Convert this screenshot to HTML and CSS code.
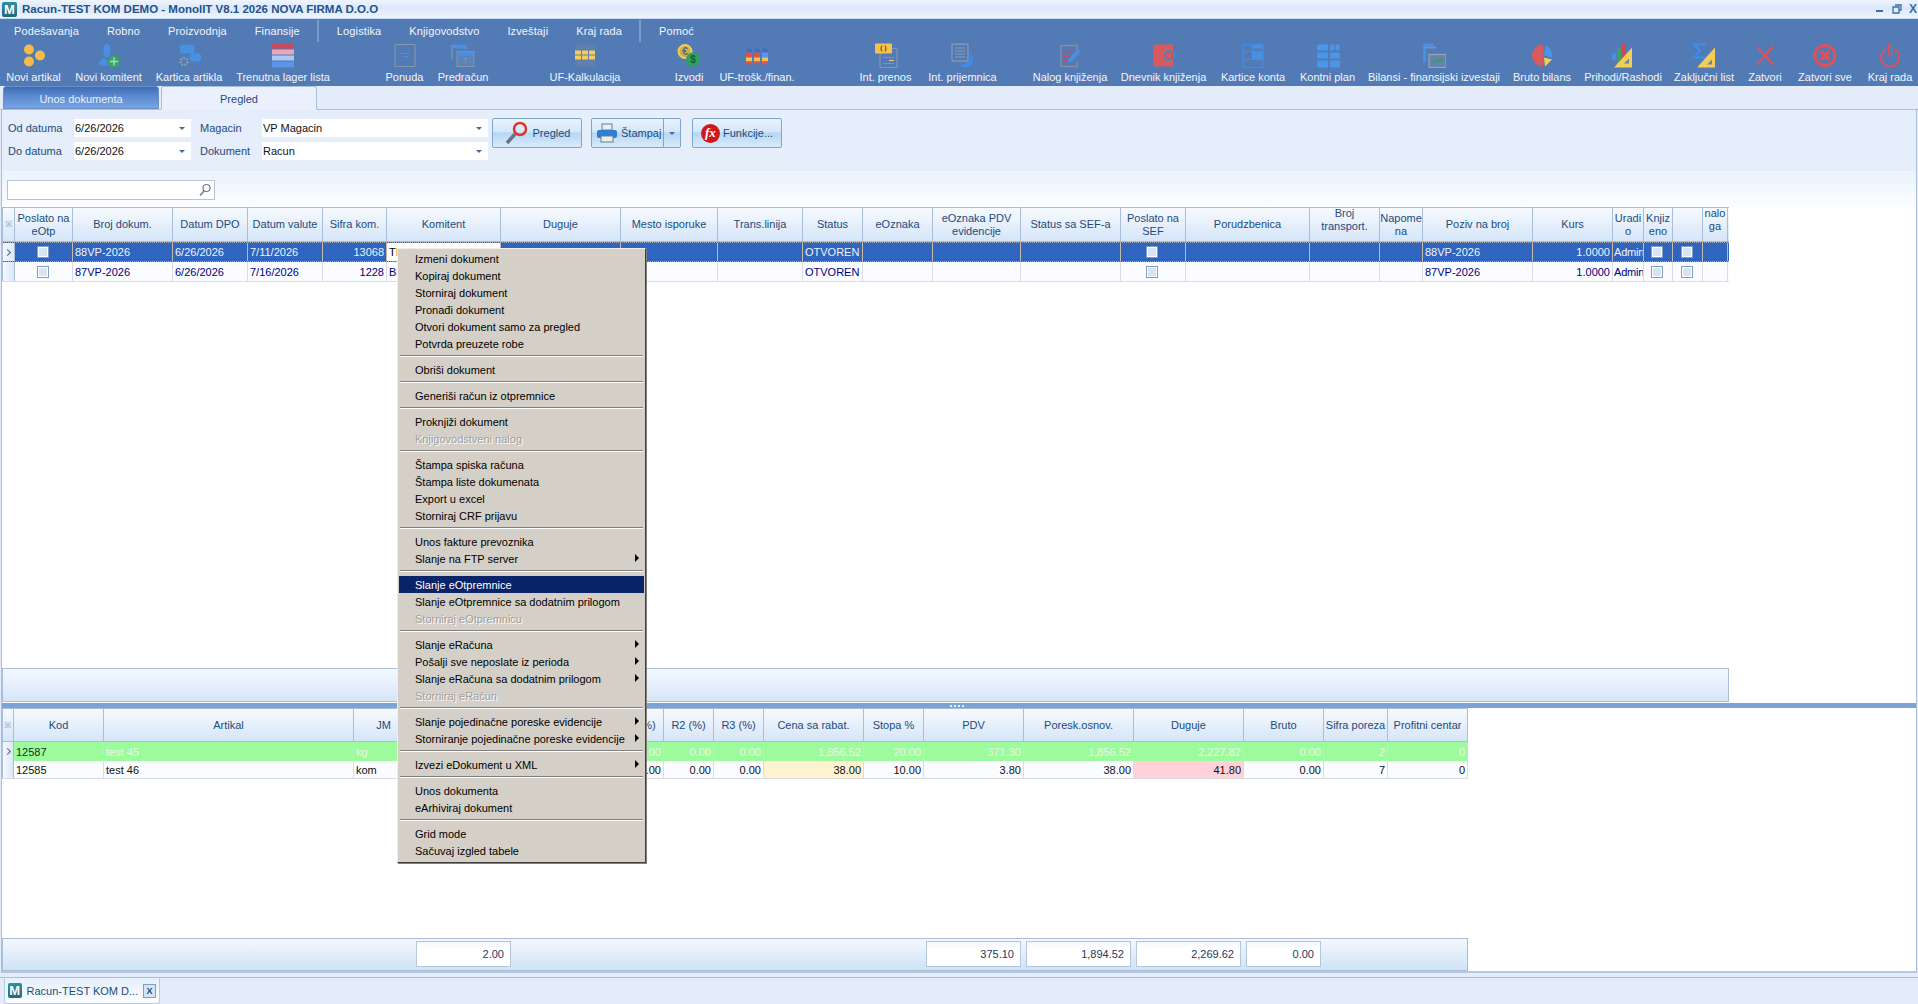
FILE: index.html
```html
<!DOCTYPE html>
<html lang="en">
<head>
<meta charset="UTF-8">
<title>Racun-TEST KOM DEMO</title>
<link rel="stylesheet" href="styles.css">
</head>
<body>
<div class="app">

  <div class="titlebar">
    <span class="logo">M</span>
    <span class="title-text">Racun-TEST KOM DEMO - MonolIT V8.1 2026 NOVA FIRMA D.O.O</span>
    <div class="win-btns">
      <svg width="10" height="10" viewBox="0 0 10 10"><rect x="1" y="6" width="7" height="2" fill="#3d6ea8"/></svg>
      <svg width="10" height="10" viewBox="0 0 10 10"><path d="M3 1h6v5H7M1 3h6v6H1z" fill="none" stroke="#3d6ea8" stroke-width="1.3"/></svg>
      <span class="win-x">X</span>
    </div>
  </div>

  <div class="band">
    <div class="menubar">
      <span class="menu-item">Podešavanja</span>
      <span class="menu-item">Robno</span>
      <span class="menu-item">Proizvodnja</span>
      <span class="menu-item">Finansije</span>
      <span class="menu-sep"></span>
      <span class="menu-item">Logistika</span>
      <span class="menu-item">Knjigovodstvo</span>
      <span class="menu-item">Izveštaji</span>
      <span class="menu-item">Kraj rada</span>
      <span class="menu-sep"></span>
      <span class="menu-item">Pomoć</span>
    </div>

    <div class="toolbar">
      <div class="tool-group tg1">
        <div class="tool">
          <svg viewBox="0 0 24 24"><circle cx="7" cy="6" r="5" fill="#f4bb45"/><circle cx="18" cy="12" r="5" fill="#f4bb45"/><circle cx="7" cy="18" r="5" fill="#f4bb45"/></svg>
          <span>Novi artikal</span>
        </div>
        <div class="tool">
          <svg viewBox="0 0 24 24"><ellipse cx="10" cy="7" rx="3.5" ry="7" fill="#4a90e2"/><path d="M2 22c0-5 3-7 5-7s4 2 4 7z" fill="#4a90e2"/><circle cx="17" cy="18" r="6" fill="#3aa368"/><path d="M17 14v8M13 18h8" stroke="#9fe0b8" stroke-width="1.5"/></svg>
          <span>Novi komitent</span>
        </div>
        <div class="tool">
          <svg viewBox="0 0 24 24"><rect x="3" y="1" width="14" height="9" rx="2" fill="#4a90e2"/><rect x="13" y="10" width="11" height="8" rx="2" fill="#4a90e2"/><circle cx="7" cy="18" r="3.5" fill="none" stroke="#8a97a8" stroke-width="2.5" stroke-dasharray="2 1"/></svg>
          <span>Kartica artikla</span>
        </div>
        <div class="tool">
          <svg viewBox="0 0 24 24"><rect x="1" width="22" height="5" fill="#c94a5a"/><rect x="1" y="6" width="22" height="5" fill="#e8a8b8"/><rect x="1" y="12" width="22" height="5" fill="#a8c8f5"/><rect x="1" y="18" width="22" height="6" fill="#5b94e8"/></svg>
          <span>Trenutna lager lista</span>
        </div>
      </div>

      <div class="tool-group tg2">
        <div class="tool">
          <svg viewBox="0 0 24 24"><rect x="2" y="1" width="20" height="22" rx="1" fill="none" stroke="#8296ad" stroke-width="1.2"/><path d="M7 10h10M9 13h6" stroke="#4a90e2" stroke-width="1.2"/></svg>
          <span>Ponuda</span>
        </div>
        <div class="tool">
          <svg viewBox="0 0 24 24"><path d="M1 16V2h14v4" fill="none" stroke="#8296ad" stroke-width="1.2"/><rect x="2" y="1" width="13" height="4" fill="#4a90e2"/><rect x="6" y="8" width="17" height="15" fill="#5c82b8" stroke="#8296ad"/><rect x="6" y="8" width="17" height="4" fill="#4a90e2"/><path d="M12 15h5M14.500 15v4" stroke="#8296ad"/></svg>
          <span>Predračun</span>
        </div>
      </div>

      <div class="tool-group tg3">
        <div class="tool">
          <svg viewBox="0 0 24 24"><rect x="2" y="1" width="20" height="22" fill="#5f7fae"/><g fill="#f3cd57"><rect x="2" y="7" width="6" height="4"/><rect x="9" y="7" width="6" height="4"/><rect x="16" y="7" width="6" height="4"/><rect x="2" y="12" width="6" height="4"/><rect x="9" y="12" width="6" height="4"/><rect x="16" y="12" width="6" height="4"/></g></svg>
          <span>UF-Kalkulacija</span>
        </div>
      </div>

      <div class="tool-group tg4">
        <div class="tool">
          <svg viewBox="0 0 24 24"><circle cx="8" cy="8" r="6.500" fill="#c9b04a" stroke="#efcb58" stroke-width="2"/><text x="8" y="11" class="coin-text" fill="#5a6a80">€</text><circle cx="16" cy="16" r="7" fill="#2fa060"/><text x="16" y="19.500" class="coin-text" fill="#0f5f38">$</text></svg>
          <span>Izvodi</span>
        </div>
        <div class="tool">
          <svg viewBox="0 0 24 24"><path d="M1 8q0-3 3-3t3 3v1H1z" fill="#3d6ec8"/><rect x="1" y="9" width="6" height="5" fill="#d9534f"/><rect x="1" y="14" width="6" height="4" fill="#f3c24f"/><path d="M1 18h6v2q-3 2-6 0z" fill="#d9534f"/><path d="M9 8q0-3 3-3t3 3v1H9z" fill="#3d6ec8"/><rect x="9" y="9" width="6" height="5" fill="#d9534f"/><rect x="9" y="14" width="6" height="4" fill="#f3c24f"/><path d="M9 18h6v2q-3 2-6 0z" fill="#d9534f"/><path d="M17 8q0-3 3-3t3 3v1h-6z" fill="#3d6ec8"/><rect x="17" y="9" width="6" height="5" fill="#5b94e8"/><rect x="17" y="14" width="6" height="4" fill="#f3c24f"/><path d="M17 18h6v2q-3 2-6 0z" fill="#d9534f"/></svg>
          <span>UF-trošk./finan.</span>
        </div>
      </div>

      <div class="tool-group tg5">
        <div class="tool">
          <svg viewBox="0 0 24 24"><rect x="6" y="5" width="17" height="19" fill="none" stroke="#8296ad" stroke-width="1.2"/><path d="M9 14h11M9 20h11" stroke="#8296ad"/><path d="M15 17h5" stroke="#f3c24f" stroke-width="1.2"/><rect x="1" width="17" height="10" rx="1" fill="#f3c24f"/><path d="M8 2q-2 3 0 6M11 2q2 3 0 6" fill="none" stroke="#8a6d1c" stroke-width="1.2"/></svg>
          <span>Int. prenos</span>
        </div>
        <div class="tool">
          <svg viewBox="0 0 24 24"><rect x="1" y="0.600" width="16" height="17" rx="1" fill="none" stroke="#8a9cb3" stroke-width="1.2"/><path d="M4 4.500h10M4 7.500h10M4 10.500h10M4 13.500h10" stroke="#8a9cb3"/><path d="M19 9C24 14 23 24 13 24C11 24 9.500 23 8.500 21.500C15 22 20 17 19 9z" fill="#3f8be6"/></svg>
          <span>Int. prijemnica</span>
        </div>
      </div>

      <div class="tool-group tg6">
        <div class="tool">
          <svg viewBox="0 0 24 24"><path d="M19 8V2H3v21h16v-5" fill="none" stroke="#8a8f9f" stroke-width="1.4"/><path d="M6 8h9M6 13h6M6 17h4" stroke="#c94a5a" stroke-width="1.4"/><path d="M20 5l3 3-9 10-4 1 1-4z" fill="#4a90e2"/></svg>
          <span>Nalog knjiženja</span>
        </div>
        <div class="tool">
          <svg viewBox="0 0 24 24"><path d="M1 3q0-2 2-2h18v22H3q-2 0-2-2z" fill="#d95a5e"/><circle cx="17" cy="12" r="5.500" fill="#a8606c" stroke="#4a90e2" stroke-width="1"/><circle cx="17" cy="12" r="2.500" fill="#d95a5e"/></svg>
          <span>Dnevnik knjiženja</span>
        </div>
        <div class="tool">
          <svg viewBox="0 0 24 24"><rect x="2" y="1" width="20" height="23" fill="none" stroke="#3f8be6" stroke-width="1.4"/><path d="M2 8h20M2 16h20M11 1v7" stroke="#3f8be6" stroke-width="1.2"/><rect x="11" y="8" width="11" height="8" fill="#4a90e2"/><rect x="11" y="1" width="11" height="4" fill="#4a90e2"/></svg>
          <span>Kartice konta</span>
        </div>
        <div class="tool">
          <svg viewBox="0 0 24 24"><g fill="#4a96ea"><rect x="1" y="1" width="11" height="6" rx="1"/><rect x="1" y="9" width="11" height="6" rx="1"/><rect x="1" y="17" width="11" height="7" rx="1"/><rect x="14" y="1" width="4" height="6" rx="1"/><rect x="19.500" y="1" width="4" height="6" rx="1"/><rect x="14" y="9" width="10" height="6" rx="1"/><rect x="14" y="17" width="10" height="7" rx="1"/></g></svg>
          <span>Kontni plan</span>
        </div>
        <div class="tool">
          <svg viewBox="0 0 24 24"><path d="M1 19V3q0-3 3-3h8v3H4v16z" fill="#4a90e2"/><rect x="3" y="3" width="11" height="2" fill="#6d94c8"/><rect x="7" y="11" width="17" height="13" fill="#6684ac" stroke="#98a4b0" stroke-width="1.2"/><path d="M10 21l3-4 2 2 2-3 2 2 3-3" fill="none" stroke="#2fa060" stroke-width="1.2"/></svg>
          <span>Bilansi - finansijski izvestaji</span>
        </div>
        <div class="tool">
          <svg viewBox="0 0 24 24"><path d="M13 1a11 11 0 1 0 0 22l1-10z" fill="#d95a5e"/><path d="M16 2a11 11 0 0 1 6 12l-8-2z" fill="#4a96ea"/><path d="M14 14l8 2-7 7z" fill="#f3cd57"/></svg>
          <span>Bruto bilans</span>
        </div>
        <div class="tool">
          <svg viewBox="0 0 24 24"><rect x="1" y="10" width="4" height="7" fill="#4a90e2"/><rect x="6" y="5" width="4" height="15" fill="#3aa368"/><rect x="11" y="0" width="4" height="15" fill="#c94a5a"/><path d="M21 4v20H3z" fill="#f3cd57"/><path d="M18 15v5h-5z" fill="#6684ac"/></svg>
          <span>Prihodi/Rashodi</span>
        </div>
        <div class="tool">
          <svg viewBox="0 0 24 24"><path d="M14 1H2l6 6-6 7h11" fill="none" stroke="#3f8be6" stroke-width="2.500"/><path d="M23 4v20H5z" fill="#f3cd57"/><path d="M20 16v5h-5z" fill="#6684ac"/></svg>
          <span>Zaključni list</span>
        </div>
        <div class="tool">
          <svg viewBox="0 0 24 24"><path d="M4 3l16 18M20 3L4 21" stroke="#d9535e" stroke-width="2.200"/></svg>
          <span>Zatvori</span>
        </div>
        <div class="tool">
          <svg viewBox="0 0 24 24"><circle cx="12" cy="12" r="10" fill="none" stroke="#d9535e" stroke-width="3"/><path d="M7.500 7.500l9 9M16.500 7.500l-9 9" stroke="#d9535e" stroke-width="3.500"/></svg>
          <span>Zatvori sve</span>
        </div>
        <div class="tool">
          <svg viewBox="0 0 24 24"><path d="M8 6a9 9 0 1 0 8 0" fill="none" stroke="#d9535e" stroke-width="2"/><rect x="10.500" y="1" width="3" height="10" fill="none" stroke="#d9535e"/></svg>
          <span>Kraj rada</span>
        </div>
      </div>
    </div>
  </div>

  <div class="tabs">
    <div class="tab tab-dark">Unos dokumenta</div>
    <div class="tab tab-open">Pregled</div>
  </div>

  <div class="content">
    <div class="filters">
      <div class="filter-grid">
        <label>Od datuma</label>
        <div class="combo"><span>6/26/2026</span><i class="caret"></i></div>
        <label class="label-2">Magacin</label>
        <div class="combo combo-wide"><span>VP Magacin</span><i class="caret"></i></div>
        <label>Do datuma</label>
        <div class="combo"><span>6/26/2026</span><i class="caret"></i></div>
        <label class="label-2">Dokument</label>
        <div class="combo combo-wide"><span>Racun</span><i class="caret"></i></div>
      </div>
      <div class="btn btn-pregled">
        <svg width="26" height="26" viewBox="0 0 26 26"><circle cx="16" cy="9" r="6" fill="none" stroke="#d8382e" stroke-width="2.500"/><path d="M11 14l-8 9" stroke="#6b7280" stroke-width="3.500"/></svg>
        <span>Pregled</span>
      </div>
      <div class="btn btn-stampa">
        <div class="btn-main">
          <svg width="22" height="22" viewBox="0 0 22 22"><rect x="6" y="2" width="10" height="6" fill="#e8eef6" stroke="#6b7a8c"/><rect x="1" y="8" width="20" height="8" rx="2" fill="#2f7fd0"/><rect x="5" y="14" width="12" height="6" fill="#e8eef6" stroke="#6b7a8c"/></svg>
          <span>Štampaj</span>
        </div>
        <div class="btn-drop"><i class="caret"></i></div>
      </div>
      <div class="btn btn-funk">
        <span class="fx">fx</span>
        <span>Funkcije...</span>
      </div>
    </div>

    <div class="search-row">
      <div class="search-box">
        <svg width="14" height="14" viewBox="0 0 14 14"><circle cx="8.500" cy="5" r="3.500" fill="none" stroke="#6b7a8c" stroke-width="1.200"/><path d="M6 8l-4 4.500" stroke="#6b7a8c" stroke-width="1.500"/></svg>
      </div>
    </div>

    <div class="upper">
      <div class="docs">
        <div class="row head">
          <div class="ind">※</div>
          <div>Poslato na<br>eOtp</div>
          <div>Broj dokum.</div>
          <div>Datum DPO</div>
          <div>Datum valute</div>
          <div>Sifra kom.</div>
          <div>Komitent</div>
          <div>Duguje</div>
          <div>Mesto isporuke</div>
          <div>Trans.linija</div>
          <div>Status</div>
          <div>eOznaka</div>
          <div>eOznaka PDV<br>evidencije</div>
          <div>Status sa SEF-a</div>
          <div>Poslato na<br>SEF</div>
          <div>Porudzbenica</div>
          <div class="clip-top">Broj<br>transport.</div>
          <div>Napome<br>na</div>
          <div>Poziv na broj</div>
          <div>Kurs</div>
          <div>Uradi<br>o</div>
          <div>Knjiz<br>eno</div>
          <div></div>
          <div class="clip-top">nalo<br>ga</div>
        </div>
        <div class="row cells selected">
          <div class="ind"><i class="chev"></i></div>
          <div class="mid"><i class="check"></i></div>
          <div>88VP-2026</div>
          <div>6/26/2026</div>
          <div>7/11/2026</div>
          <div class="num">13068</div>
          <div class="editing">TI</div>
          <div></div>
          <div></div>
          <div></div>
          <div>OTVOREN</div>
          <div></div>
          <div></div>
          <div></div>
          <div class="mid"><i class="check"></i></div>
          <div></div>
          <div></div>
          <div></div>
          <div>88VP-2026</div>
          <div class="num">1.0000</div>
          <div class="tight">Admin</div>
          <div class="mid"><i class="check"></i></div>
          <div class="mid"><i class="check"></i></div>
          <div></div>
        </div>
        <div class="row cells">
          <div class="ind"></div>
          <div class="mid"><i class="check"></i></div>
          <div>87VP-2026</div>
          <div>6/26/2026</div>
          <div>7/16/2026</div>
          <div class="num">1228</div>
          <div>BU</div>
          <div></div>
          <div></div>
          <div></div>
          <div>OTVOREN</div>
          <div></div>
          <div></div>
          <div></div>
          <div class="mid"><i class="check"></i></div>
          <div></div>
          <div></div>
          <div></div>
          <div>87VP-2026</div>
          <div class="num">1.0000</div>
          <div class="tight">Admin</div>
          <div class="mid"><i class="check"></i></div>
          <div class="mid"><i class="check"></i></div>
          <div></div>
        </div>
      </div>
      <div class="docs-footer"></div>
    </div>

    <div class="splitter"><span class="grip"></span></div>

    <div class="lower">
      <div class="items">
        <div class="row head">
          <div class="ind">※</div>
          <div>Kod</div>
          <div>Artikal</div>
          <div>JM</div>
          <div></div>
          <div></div>
          <div>R1 (%)</div>
          <div>R2 (%)</div>
          <div>R3 (%)</div>
          <div>Cena sa rabat.</div>
          <div>Stopa %</div>
          <div>PDV</div>
          <div>Poresk.osnov.</div>
          <div>Duguje</div>
          <div>Bruto</div>
          <div>Sifra poreza</div>
          <div>Profitni centar</div>
        </div>
        <div class="row cells green">
          <div class="ind"><i class="chev chev-dark"></i></div>
          <div class="dark">12587</div>
          <div>test 45</div>
          <div>kg</div>
          <div></div>
          <div></div>
          <div class="num">0.00</div>
          <div class="num">0.00</div>
          <div class="num">0.00</div>
          <div class="num">1,856.52</div>
          <div class="num">20.00</div>
          <div class="num">371.30</div>
          <div class="num">1,856.52</div>
          <div class="num">2,227.82</div>
          <div class="num">0.00</div>
          <div class="num">2</div>
          <div class="num">0</div>
        </div>
        <div class="row cells plain">
          <div class="ind"></div>
          <div>12585</div>
          <div>test 46</div>
          <div>kom</div>
          <div></div>
          <div></div>
          <div class="num">0.00</div>
          <div class="num">0.00</div>
          <div class="num">0.00</div>
          <div class="num tint-yellow">38.00</div>
          <div class="num">10.00</div>
          <div class="num">3.80</div>
          <div class="num">38.00</div>
          <div class="num tint-pink">41.80</div>
          <div class="num">0.00</div>
          <div class="num">7</div>
          <div class="num">0</div>
        </div>
      </div>
      <div class="totals">
        <div class="total t-qty">2.00</div>
        <div class="total t-pdv">375.10</div>
        <div class="total t-osn">1,894.52</div>
        <div class="total t-dug">2,269.62</div>
        <div class="total t-bru">0.00</div>
      </div>
    </div>
  </div>

  <div class="bottom">
    <div class="doc-tab">
      <span class="logo">M</span>
      <span>Racun-TEST KOM D...</span>
      <span class="doc-close">X</span>
    </div>
  </div>

  <div class="context-menu">
    <div class="mi">Izmeni dokument</div>
    <div class="mi">Kopiraj dokument</div>
    <div class="mi">Storniraj dokument</div>
    <div class="mi">Pronađi dokument</div>
    <div class="mi">Otvori dokument samo za pregled</div>
    <div class="mi">Potvrda preuzete robe</div>
    <div class="ms"></div>
    <div class="mi">Obriši dokument</div>
    <div class="ms"></div>
    <div class="mi">Generiši račun iz otpremnice</div>
    <div class="ms"></div>
    <div class="mi">Proknjiži dokument</div>
    <div class="mi off">Knjigovodstveni nalog</div>
    <div class="ms"></div>
    <div class="mi">Štampa spiska računa</div>
    <div class="mi">Štampa liste dokumenata</div>
    <div class="mi">Export u excel</div>
    <div class="mi">Storniraj CRF prijavu</div>
    <div class="ms"></div>
    <div class="mi">Unos fakture prevoznika</div>
    <div class="mi sub">Slanje na FTP server</div>
    <div class="ms"></div>
    <div class="mi active">Slanje eOtpremnice</div>
    <div class="mi">Slanje eOtpremnice sa dodatnim prilogom</div>
    <div class="mi off">Storniraj eOtpremnicu</div>
    <div class="ms"></div>
    <div class="mi sub">Slanje eRačuna</div>
    <div class="mi sub">Pošalji sve neposlate iz perioda</div>
    <div class="mi sub">Slanje eRačuna sa dodatnim prilogom</div>
    <div class="mi off">Storniraj eRačun</div>
    <div class="ms"></div>
    <div class="mi sub">Slanje pojedinačne poreske evidencije</div>
    <div class="mi sub">Storniranje pojedinačne poreske evidencije</div>
    <div class="ms"></div>
    <div class="mi sub">Izvezi eDokument u XML</div>
    <div class="ms"></div>
    <div class="mi">Unos dokumenta</div>
    <div class="mi">eArhiviraj dokument</div>
    <div class="ms"></div>
    <div class="mi">Grid mode</div>
    <div class="mi">Sačuvaj izgled tabele</div>
  </div>

</div>
</body>
</html>
```

FILE: styles.css
```css
* {
  margin: 0;
  padding: 0;
  box-sizing: border-box;
}

body {
  width: 1918px;
  height: 1004px;
  overflow: hidden;
  background: #e4ecfb;
  font-family: "Liberation Sans", Arial, sans-serif;
  font-size: 11px;
  color: #1c4b7e;
}

.app {
  position: relative;
  width: 1918px;
  height: 1004px;
  display: flex;
  flex-direction: column;
}

/* Title bar */
.titlebar {
  height: 18px;
  display: flex;
  align-items: center;
  padding-left: 2px;
  gap: 5px;
  background: linear-gradient(#eef4fd, #dbe8fb 45%, #eef4fe);
}

.logo {
  width: 15px;
  height: 15px;
  display: flex;
  align-items: center;
  justify-content: center;
  background: linear-gradient(#2f8f9e, #1f6a7c);
  color: #fff;
  font-weight: bold;
  font-size: 13px;
  line-height: 15px;
  border-radius: 2px;
}

.title-text {
  font-weight: bold;
  font-size: 11.5px;
  color: #24528a;
}

.win-btns {
  margin-left: auto;
  display: flex;
  align-items: center;
  gap: 7px;
  padding-right: 1px;
}

.win-x {
  font-weight: bold;
  font-size: 12px;
  color: #3d6ea8;
}

/* Blue band with menu and toolbar */
.band {
  height: 68px;
  background: #527ab4;
  border-top: 1px solid #c6d8f2;
  color: #f2f6fc;
}

.menubar {
  height: 23px;
  display: flex;
  align-items: center;
}

.menu-item {
  padding: 0 14px;
  letter-spacing: 0.12px;
}

.menu-sep {
  width: 2px;
  height: 22px;
  margin: 0 3.5px;
  background: #7d9bc8;
}

.toolbar {
  display: flex;
  padding-left: 7px;
}

.tool-group {
  display: grid;
  grid-auto-flow: column;
  column-gap: 16px;
}

.tg1 { grid-template-columns: 53px 65px 64px 92px; }
.tg2 { grid-template-columns: 36px 49px; margin-left: 57.5px; }
.tg3 { grid-template-columns: 66px; margin-left: 64.5px; }
.tg4 { grid-template-columns: 28px 76px; margin-left: 57px; }
.tg5 { grid-template-columns: 53px 69px; margin-left: 64px; }
.tg6 { grid-template-columns: 72px 83px 64px 53px 128px 56px 74px 56px 34px 54px 44px; margin-left: 37px; }

.tool {
  display: flex;
  flex-direction: column;
  align-items: center;
  white-space: nowrap;
}

.tool svg {
  width: 24px;
  height: 25px;
  margin-top: 1px;
  flex: none;
}

.tool span {
  margin-top: 2px;
  line-height: 14px;
}

.coin-text {
  font-size: 10px;
  font-weight: bold;
  text-anchor: middle;
}

/* Tabs */
.tabs {
  height: 24px;
  display: flex;
  align-items: flex-end;
  padding-left: 3px;
  gap: 2px;
  border-bottom: 1px solid #a8c0dc;
}

.tab {
  width: 156px;
  height: 23px;
  padding-top: 2px;
  display: flex;
  align-items: center;
  justify-content: center;
  border-radius: 3px 3px 0 0;
}

.tab-dark {
  background: linear-gradient(#3f6db5, #5c8ad0 45%, #77a4e6);
  color: #e8f0fc;
  border: 1px solid #6a8ec4;
}

.tab-open {
  background: #eaf1fc;
  border: 1px solid #a8c0dc;
  border-bottom: 1px solid #eaf1fc;
  margin-bottom: -1px;
  height: 24px;
}

/* Content frame */
.content {
  flex: 1;
  display: flex;
  flex-direction: column;
  margin: 0 1px;
  background: #fff;
  border-left: 1px solid #a8c0dc;
  border-right: 1px solid #a8c0dc;
  border-bottom: 2px solid #b4c8e2;
  min-height: 0;
}

.filters {
  height: 62px;
  display: flex;
  align-items: flex-start;
  padding: 8px 0 0 6px;
  background: #e6edfb;
  border-bottom: 1px solid #f2f6fd;
}

.filter-grid {
  display: grid;
  grid-template-columns: 66px 117px 71px 226px;
  grid-auto-rows: 18px;
  row-gap: 5px;
  align-items: center;
  margin-top: 1px;
}

.label-2 {
  padding-left: 9px;
}

.combo {
  height: 18px;
  background: #fff;
  color: #111;
  display: flex;
  align-items: center;
  justify-content: space-between;
  padding: 0 6px 0 1px;
}

.caret {
  width: 0;
  height: 0;
  border-left: 3px solid transparent;
  border-right: 3px solid transparent;
  border-top: 3px solid #4a6a90;
}

.btn {
  width: 90px;
  height: 30px;
  display: flex;
  align-items: center;
  justify-content: center;
  gap: 3px;
  border: 1px solid #7fa4cf;
  border-radius: 2px;
  background: linear-gradient(#eaf3fd, #d4e7fa 45%, #b6d6f4 50%, #d9ebfb);
  color: #1c4b7e;
}

.btn-pregled {
  margin-left: 4px;
}

.btn-stampa {
  margin-left: 9px;
  gap: 0;
  align-items: stretch;
}

.btn-main {
  flex: 1;
  display: flex;
  align-items: center;
  gap: 3px;
  padding-left: 4px;
  border-right: 1px solid #7fa4cf;
}

.btn-drop {
  width: 16px;
  display: flex;
  align-items: center;
  justify-content: center;
}

.btn-funk {
  margin-left: 11px;
}

.fx {
  width: 19px;
  height: 19px;
  border-radius: 50%;
  background: #d0181c;
  color: #fff;
  font-family: "Liberation Serif", serif;
  font-style: italic;
  font-weight: bold;
  font-size: 13px;
  line-height: 18px;
  text-align: center;
}

.search-row {
  height: 35px;
  padding: 8px 0 0 5px;
  background: linear-gradient(#ecf2fc, #fbfdff);
}

.search-box {
  width: 208px;
  height: 20px;
  background: #fff;
  border: 1px solid #b4c4d6;
  display: flex;
  align-items: center;
  justify-content: flex-end;
  padding-right: 2px;
}

/* Grids */
.upper {
  height: 496px;
  flex: none;
  display: flex;
  flex-direction: column;
  justify-content: space-between;
  width: 1727px;
}

.row {
  display: grid;
}

.docs .row {
  grid-template-columns: 13px 58px 100px 75px 75px 64px 114px 120px 97px 85px 60px 70px 88px 100px 65px 124px 70px 43px 110px 80px 31px 29px 30px 25px;
}

.items .row {
  grid-template-columns: 12px 90px 250px 60px 90px 110px 50px 50px 50px 100px 60px 100px 110px 110px 80px 64px 80px;
  width: 1466px;
}

.head {
  height: 35px;
  background: linear-gradient(#f7fafe, #d5e5f8);
  border-top: 1px solid #a9bfd9;
  border-bottom: 1px solid #a9bfd9;
}

.items .head {
  height: 34px;
}

.head > div {
  display: flex;
  align-items: center;
  justify-content: center;
  text-align: center;
  line-height: 13px;
  overflow: hidden;
  border-right: 1px solid #a9bfd9;
  color: #1c4b7e;
}

.head > .ind {
  color: #8aa0b8;
  font-size: 9px;
  border-left: 1px solid #a9bfd9;
}

.head > .clip-top {
  align-items: flex-start;
  margin-top: -1px;
}

.cells {
  height: 20px;
  color: #000080;
  background: #fafcff;
  border-bottom: 1px solid #d8dde4;
}

.cells > div {
  display: flex;
  align-items: center;
  padding: 0 2px;
  overflow: hidden;
  white-space: nowrap;
  border-right: 1px solid #d8dde4;
}

.cells > .ind {
  padding: 0;
  background: linear-gradient(90deg, #f4f8fe, #dbe8f8);
  border-left: 1px solid #a9bfd9;
  border-right: 1px solid #a9bfd9;
  justify-content: center;
}

.cells > .num {
  justify-content: flex-end;
}

.cells > .mid {
  justify-content: center;
  padding: 0 2px 0 0;
}

.cells > .tight {
  padding: 0 0 0 1px;
  letter-spacing: -0.2px;
}

.check {
  width: 12px;
  height: 12px;
  background: #d6e4f4;
  border: 1px solid #7fa0c4;
  box-shadow: inset 0 0 0 1px #fff;
}

.chev {
  width: 5px;
  height: 5px;
  border-top: 1.5px solid #4a6a90;
  border-right: 1.5px solid #4a6a90;
  transform: rotate(45deg);
  margin-left: -2px;
}

.selected {
  background: #2f64bf;
  color: #f0f4fc;
  border-top: 1px dotted #a0a8b4;
  border-bottom: 1px dotted #a0a8b4;
}

.selected > div {
  border-right-color: #c9b8a4;
}

.selected > .editing {
  background: #fff;
  color: #000;
}

.docs-footer {
  height: 34px;
  background: linear-gradient(#f4f8fe, #d6e6f8);
  border: 1px solid #a9bfd9;
  margin-bottom: 1px;
}

.splitter {
  height: 5px;
  flex: none;
  background: #7ca3d6;
  display: flex;
  justify-content: center;
  align-items: center;
}

.grip {
  width: 15px;
  height: 2px;
  margin-left: -4px;
  background: repeating-linear-gradient(90deg, #eaf1fc 0 2px, transparent 2px 4px);
}

.lower {
  flex: 1;
  min-height: 0;
  display: flex;
  flex-direction: column;
  justify-content: space-between;
  width: 1466px;
}

.green {
  height: 19px;
  background: #9dfb9d;
  color: #e6f8e6;
  border-bottom: none;
}

.green > div {
  border-right-color: #b6f2b6;
}

.green > .dark {
  color: #10301a;
}

.plain {
  height: 18px;
  color: #111;
}

.tint-yellow {
  background: #fff3d2;
}

.tint-pink {
  background: #ffd2da;
}

.totals {
  height: 33px;
  flex: none;
  display: grid;
  grid-template-columns: 95px 405px 95px 105px 105px 75px;
  column-gap: 5px;
  padding: 2px 0 0 413px;
  background: linear-gradient(#f4f8fe, #cfe2f7);
  border: 1px solid #a9bfd9;
}

.total {
  height: 26px;
  padding-right: 6px;
  display: flex;
  align-items: center;
  justify-content: flex-end;
  background: linear-gradient(#f4f7fc, #fff 30%);
  border: 1px solid #b4c6dc;
  color: #1c3b5e;
}

.t-pdv { grid-column: 3; }

/* Bottom doc tabs */
.bottom {
  height: 27px;
  flex: none;
  margin-top: 4px;
  padding-left: 4px;
  border-top: 1px solid #a8bedc;
}

.doc-tab {
  width: 156px;
  height: 26px;
  display: flex;
  align-items: center;
  gap: 5px;
  padding-left: 3px;
  background: linear-gradient(#e6effc, #fbfdff);
  border: 1px solid #b8cce4;
  border-top: none;
  border-radius: 0 0 3px 3px;
  white-space: nowrap;
}

.doc-close {
  width: 14px;
  height: 14px;
  margin-left: auto;
  margin-right: 3px;
  display: flex;
  align-items: center;
  justify-content: center;
  border: 1px solid #7f9fc8;
  background: #d4e4f8;
  font-weight: bold;
  font-size: 9px;
}

/* Context menu */
.context-menu {
  position: absolute;
  left: 397px;
  top: 248px;
  width: 249px;
  height: 615px;
  padding: 1px;
  background: #d4d0c8;
  border: 1px solid;
  border-color: #f0eee8 #404040 #404040 #f0eee8;
  box-shadow: 1px 1px 0 #808080;
  color: #000;
  font-size: 11px;
}

.mi {
  position: relative;
  height: 17px;
  line-height: 18px;
  padding-left: 16px;
  white-space: nowrap;
}

.mi.off {
  color: #a0a09c;
  text-shadow: 1px 1px 0 #fff;
}

.mi.active {
  background: #0a246a;
  color: #fff;
}

.mi.sub::after {
  content: '';
  position: absolute;
  right: 5px;
  top: 4px;
  border-left: 4px solid #000;
  border-top: 4px solid transparent;
  border-bottom: 4px solid transparent;
}

.ms {
  height: 2px;
  margin: 3px 1px 4px;
  background: #808080;
  border-bottom: 1px solid #fff;
}
```
